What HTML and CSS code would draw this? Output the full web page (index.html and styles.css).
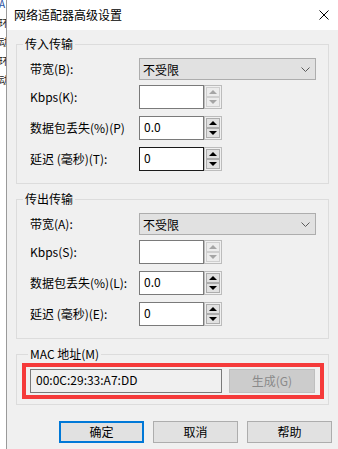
FILE: index.html
```html
<!DOCTYPE html>
<html lang="zh-CN">
<head>
<meta charset="utf-8">
<title>网络适配器高级设置</title>
<link rel="stylesheet" href="styles.css">
</head>
<body>
<div class="screen">
  <div class="bgwin">
    <span class="bgline blue">A</span>
    <span class="bgline">环</span>
    <span class="bgline">动</span>
    <span class="bgline">环</span>
    <span class="bgline">动</span>
  </div>
  <div class="dialog">
    <div class="titlebar">
      <span class="title">网络适配器高级设置</span>
      <svg class="close" width="10" height="10" viewBox="0 0 10 10"><path d="M0.5 0.5L9.5 9.5M9.5 0.5L0.5 9.5" stroke="#000" stroke-width="1" fill="none"/></svg>
    </div>
    <div class="content">
      <fieldset class="group">
        <legend>传入传输</legend>
        <div class="rows">
          <div class="row row-select">
            <span class="label">带宽(B):</span>
            <div class="select"><span>不受限</span><svg class="chev" width="9" height="5" viewBox="0 0 9 5"><path d="M0.5 0.5L4.5 4.5L8.5 0.5" stroke="#5a5a5a" stroke-width="1" fill="none"/></svg></div>
          </div>
          <div class="row">
            <span class="label">Kbps(K):</span>
            <div class="edit"></div>
            <div class="updown disabled"><div class="ud"><i class="up"></i></div><div class="ud"><i class="down"></i></div></div>
          </div>
          <div class="row">
            <span class="label">数据包丢失(%)(P)</span>
            <div class="edit">0.0</div>
            <div class="updown"><div class="ud"><i class="up"></i></div><div class="ud"><i class="down"></i></div></div>
          </div>
          <div class="row">
            <span class="label">延迟 (毫秒)(T):</span>
            <div class="edit hover">0</div>
            <div class="updown"><div class="ud"><i class="up"></i></div><div class="ud"><i class="down"></i></div></div>
          </div>
        </div>
      </fieldset>
      <fieldset class="group">
        <legend>传出传输</legend>
        <div class="rows">
          <div class="row row-select">
            <span class="label">带宽(A):</span>
            <div class="select"><span>不受限</span><svg class="chev" width="9" height="5" viewBox="0 0 9 5"><path d="M0.5 0.5L4.5 4.5L8.5 0.5" stroke="#5a5a5a" stroke-width="1" fill="none"/></svg></div>
          </div>
          <div class="row">
            <span class="label">Kbps(S):</span>
            <div class="edit"></div>
            <div class="updown disabled"><div class="ud"><i class="up"></i></div><div class="ud"><i class="down"></i></div></div>
          </div>
          <div class="row">
            <span class="label">数据包丢失(%)(L):</span>
            <div class="edit">0.0</div>
            <div class="updown"><div class="ud"><i class="up"></i></div><div class="ud"><i class="down"></i></div></div>
          </div>
          <div class="row">
            <span class="label">延迟 (毫秒)(E):</span>
            <div class="edit">0</div>
            <div class="updown"><div class="ud"><i class="up"></i></div><div class="ud"><i class="down"></i></div></div>
          </div>
        </div>
      </fieldset>
      <fieldset class="group group-mac">
        <legend>MAC 地址(M)</legend>
        <div class="highlight">
          <div class="edit mac">00:0C:29:33:A7:DD</div>
          <div class="btn gen">生成(G)</div>
        </div>
      </fieldset>
      <div class="buttons">
        <div class="btn default">确定</div>
        <div class="btn">取消</div>
        <div class="btn">帮助</div>
      </div>
    </div>
  </div>
</div>
</body>
</html>
```
FILE: styles.css
```css
* { box-sizing: border-box; }
html, body { margin: 0; padding: 0; }
body {
  font-family: "Noto Sans CJK SC", "Noto Sans", sans-serif;
  font-size: 12px;
  color: #000;
  background: #ffffff;
}
.screen {
  width: 338px;
  height: 449px;
  overflow: hidden;
  display: flex;
}
.bgwin {
  width: 6px;
  flex: none;
  overflow: hidden;
  background: #ffffff;
  display: flex;
  flex-direction: column;
  margin-top: -6px;
}
.bgline {
  display: block;
  font-size: 10px;
  line-height: 19px;
  margin-left: -1px;
  white-space: nowrap;
  color: #222;
}
.bgline.blue { color: #1f4fa0; }
.dialog {
  flex: 1;
  min-width: 0;
  border-left: 1px solid #9a9a9a;
  background: #f0f0f0;
  display: flex;
  flex-direction: column;
}
.titlebar {
  height: 30px;
  background: #ffffff;
  display: flex;
  align-items: center;
  justify-content: space-between;
  padding: 0 9px 0 7px;
}
.title {
  font-size: 12px;
  line-height: 30px;
  color: #000;
}
.close { display: block; flex: none; width: 10px; height: 10px; }
.content {
  padding: 7px 9px 0 9px;
  display: flex;
  flex-direction: column;
  gap: 8px;
  min-width: 0;
}
.group {
  margin: 0;
  padding: 0;
  border: 1px solid #dcdcdc;
  min-width: 0;
}
.group legend {
  margin-left: 6px;
  padding: 0 2px;
  font-size: 12px;
  line-height: 14px;
}
.rows {
  padding: 7px 0 12px 13px;
  display: flex;
  flex-direction: column;
  gap: 7px;
}
.row {
  display: flex;
  align-items: center;
  height: 24px;
}
.row-select {
  height: 22px;
  margin-bottom: -2px;
}
.label {
  width: 109px;
  flex: none;
  white-space: nowrap;
  line-height: 16px;
}
.select {
  width: 177px;
  flex: none;
  height: 22px;
  background: #e1e1e1;
  border: 1px solid #adadad;
  display: flex;
  align-items: center;
  justify-content: space-between;
  padding: 0 5px 0 3px;
}
.chev { display: block; }
.edit {
  width: 65px;
  flex: none;
  height: 24px;
  background: #ffffff;
  border: 1px solid #7a7a7a;
  padding: 0 0 0 4px;
  line-height: 20px;
  white-space: nowrap;
}
.edit.hover { border-color: #1a1a1a; }
.updown {
  width: 18px;
  flex: none;
  height: 24px;
  border: 1px solid #bcbcbc;
  padding: 1px;
  display: flex;
  flex-direction: column;
  background: #f0f0f0;
}
.ud {
  flex: 1;
  border: 1px solid #adadad;
  background: #e1e1e1;
  display: flex;
  align-items: center;
  justify-content: center;
}
.ud i {
  display: block;
  width: 0;
  height: 0;
  border-left: 4px solid transparent;
  border-right: 4px solid transparent;
}
.ud i.up { border-bottom: 4px solid #000; }
.ud i.down { border-top: 4px solid #000; }
.updown.disabled .ud { border-color: #cfcfcf; background: #ececec; }
.updown.disabled .ud i.up { border-bottom-color: #a5a5a5; }
.updown.disabled .ud i.down { border-top-color: #a5a5a5; }
.group-mac { padding: 2px 4px 5px 5px; }
.highlight {
  border: 4px solid #f53a3a;
  height: 36px;
  display: flex;
  align-items: center;
  gap: 7px;
  padding: 0 5px 1px 4px;
}
.edit.mac {
  flex: 1;
  width: auto;
  min-width: 0;
  background: #f0f0f0;
  border-color: #7a7a7a;
  padding-left: 5px;
}
.btn {
  height: 22px;
  border: 1px solid #adadad;
  background: #e1e1e1;
  display: flex;
  align-items: center;
  justify-content: center;
  line-height: 16px;
}
.btn.gen {
  width: 86px;
  flex: none;
  height: 24px;
  background: #cccccc;
  border-color: #bfbfbf;
  color: #8a8a8a;
}
.buttons {
  display: flex;
  gap: 9px;
  padding-left: 43px;
  margin-top: 8px;
  margin-right: -9px;
}
.buttons .btn { width: 85px; flex: none; }
.btn.default { border: 2px solid #0078d7; }
```
